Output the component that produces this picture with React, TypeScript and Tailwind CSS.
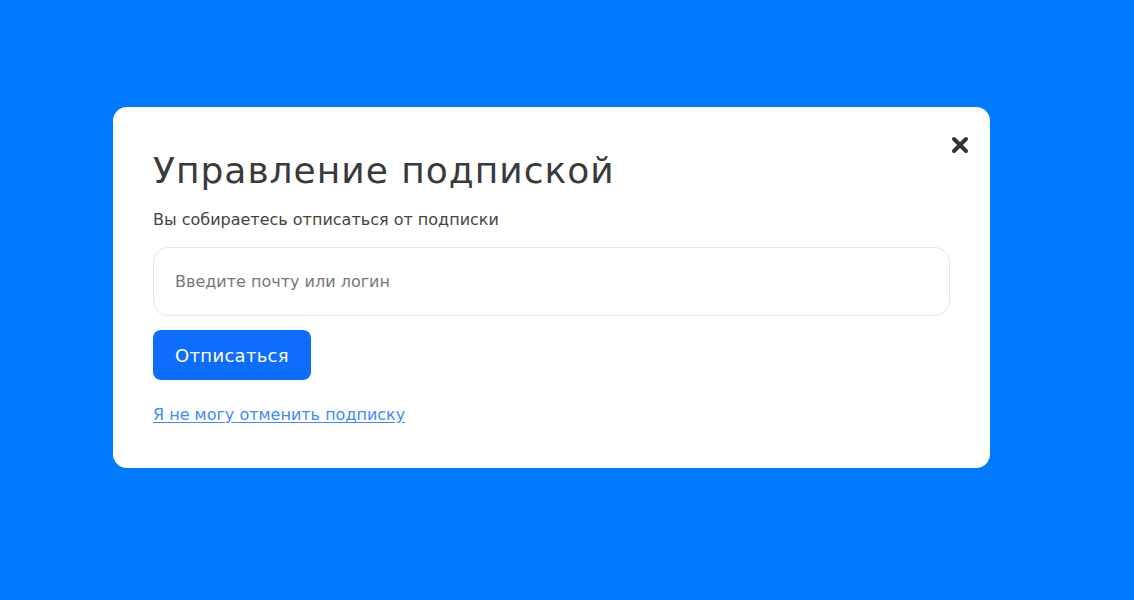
export default function App() {
    return (
        <div
            className="flex h-[600px] w-full items-start bg-[#007bff] pl-[113px] pt-[107px]"
            style={{ fontFamily: '"DejaVu Sans", "Noto Sans", sans-serif' }}
        >
            <div className="relative w-[877px] rounded-[14px] bg-white px-10 pb-[43px] pt-[42px]">
                <button
                    type="button"
                    className="absolute right-[18px] top-[26px] flex h-6 w-6 items-center justify-center text-[#333]"
                    aria-label="Закрыть"
                >
                    <svg width="18" height="18" viewBox="0 0 18 18">
                        <path d="M3 3 L15 15 M15 3 L3 15" stroke="currentColor" strokeWidth="4" strokeLinecap="round" />
                    </svg>
                </button>
                <h1 className="text-[36px] font-normal leading-[44px] tracking-[1px] text-[#3a3a3a]">
                    Управление подпиской
                </h1>
                <p className="mt-[17px] text-[16px] leading-5 text-[#444]">
                    Вы собираетесь отписаться от подписки
                </p>
                <input
                    type="text"
                    placeholder="Введите почту или логин"
                    className="mt-[17px] block h-[69px] w-full rounded-[15px] border border-[#e6e6e6] px-[21px] text-[16px] text-[#333] outline-none placeholder:text-[#777]"
                />
                <button
                    type="button"
                    className="mt-[14px] flex h-[50px] w-[158px] items-center justify-center rounded-[8px] bg-[#0d6efd] text-[18px] tracking-[0.3px] text-white"
                >
                    Отписаться
                </button>
                <a
                    href="#"
                    className="mt-[25px] block w-fit text-[16px] leading-5 text-[#3d8bfd] underline underline-offset-2"
                >
                    Я не могу отменить подписку
                </a>
            </div>
        </div>
    );
}
